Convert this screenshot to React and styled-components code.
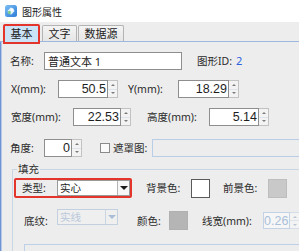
import React from 'react';
import styled, { createGlobalStyle } from 'styled-components';

const GlobalStyle = createGlobalStyle`
  html, body {
    margin: 0;
    padding: 0;
    background: #ededed;
  }
  body {
    font-family: "Noto Sans", "Noto Sans CJK SC", sans-serif;
    color: #2b2b2b;
  }
`;

const Window = styled.div`
  width: 299px;
  height: 251px;
  overflow: hidden;
  display: flex;
  flex-direction: column;
  background: #ededed;
`;

const TitleBar = styled.div`
  flex: none;
  height: 22px;
  display: flex;
  align-items: center;
  gap: 5px;
  padding-left: 5px;
  background: #fff;
  font-size: 10px;
  color: #222;
`;

const TabStrip = styled.div`
  flex: none;
  height: 19px;
  display: flex;
  align-items: flex-end;
  padding-left: 3px;
  border-bottom: 1px solid #9db8de;
`;

const Tab = styled.div`
  box-sizing: border-box;
  position: relative;
  z-index: ${p => (p.$active ? 2 : 1)};
  width: ${p => p.$w}px;
  height: ${p => (p.$active ? 20 : 16)}px;
  margin-right: ${p => (p.$active ? 2 : 1)}px;
  margin-bottom: ${p => (p.$active ? -3 : 0)}px;
  display: flex;
  align-items: center;
  justify-content: center;
  border: ${p => (p.$active ? '2px solid #e3352c' : '1px solid #b3b3b3')};
  border-bottom: ${p => (p.$active ? '2px solid #e3352c' : 'none')};
  border-radius: 2px 2px 0 0;
  background: ${p => (p.$active ? '#cbe3f6' : 'linear-gradient(#f4f4f4, #e6e6e6)')};
  font-size: 11px;
  line-height: 14px;
  color: #222;
`;

const Panel = styled.div`
  flex: 1;
  display: flex;
  flex-direction: column;
  overflow: hidden;
  box-shadow: inset 1px 0 #7195d0, inset 2px 0 #b3c8ea;
`;

const Row = styled.div`
  flex: none;
  display: flex;
  align-items: center;
  height: ${p => p.$h || 18}px;
  margin-top: ${p => p.$mt || 0}px;
`;

const Label = styled.span`
  flex: none;
  width: ${p => p.$w}px;
  margin-left: ${p => p.$ml || 0}px;
  font-size: 10.5px;
  line-height: 14px;
  white-space: nowrap;
  color: #2b2b2b;
`;

const IdValue = styled.span`
  margin-left: 4px;
  font-size: 11px;
  line-height: 14px;
  color: #2f5fe0;
`;

const TextBox = styled.div`
  flex: none;
  box-sizing: border-box;
  width: ${p => p.$w}px;
  height: 18px;
  display: flex;
  align-items: center;
  padding-left: 3px;
  border: 1px solid ${p => (p.$disabled ? '#b9cde6' : '#8e8e8e')};
  background: ${p => (p.$disabled ? 'transparent' : '#fff')};
  font-size: 11px;
  color: #222;
`;

const Spinner = styled.div`
  flex: none;
  display: flex;
  width: ${p => p.$w}px;
  height: ${p => p.$h || 18}px;
`;

const SpinField = styled.div`
  flex: 1;
  box-sizing: border-box;
  display: flex;
  align-items: center;
  justify-content: flex-end;
  padding-right: 1px;
  border: 1px solid ${p => (p.$disabled ? '#c3d2e4' : '#8e8e8e')};
  background: ${p => (p.$disabled ? '#f6f6f6' : '#fff')};
  font-family: "Liberation Sans Narrow", "Liberation Sans", sans-serif;
  font-size: 12.5px;
  color: ${p => (p.$disabled ? '#aac0da' : '#1e1e1e')};
`;

const SpinButtons = styled.div`
  flex: none;
  width: 10px;
  display: flex;
  flex-direction: column;
  box-sizing: border-box;
  border: 1px solid ${p => (p.$disabled ? '#d4dde8' : '#c2c2c2')};
  border-left: none;
  background: #f3f3f3;
`;

const SpinBtn = styled.div`
  flex: 1;
  display: flex;
  align-items: center;
  justify-content: center;
  & + & {
    border-top: 1px solid ${p => (p.$disabled ? '#dde4ec' : '#d2d2d2')};
  }
  &::after {
    content: '';
    border-left: 2px solid transparent;
    border-right: 2px solid transparent;
    ${p => (p.$down ? 'border-top' : 'border-bottom')}: 2px solid
      ${p => (p.$disabled ? '#b8c6d6' : '#7c7c7c')};
  }
`;

const CheckBox = styled.span`
  flex: none;
  box-sizing: border-box;
  width: 10px;
  height: 10px;
  margin-left: ${p => p.$ml}px;
  border: 1px solid #8a8a8a;
  background: #fafafa;
`;

const Group = styled.fieldset`
  flex: none;
  width: 320px;
  min-width: 0;
  margin: 5px 0 0 12px;
  padding: 0;
  border: 1px solid #c9d6e6;
  border-right: none;
  border-bottom: none;
`;

const GroupTitle = styled.legend`
  margin-left: 4px;
  padding: 0 1px;
  font-size: 10.5px;
  line-height: 14px;
  color: #2b2b2b;
`;

const Highlight = styled.div`
  flex: none;
  box-sizing: border-box;
  display: flex;
  align-items: center;
  width: 118px;
  height: 20px;
  margin-left: 1px;
  padding-left: 6px;
  border: 2px solid #e3352c;
  border-radius: 2px;
`;

const Combo = styled.div`
  flex: none;
  box-sizing: border-box;
  display: flex;
  width: ${p => p.$w}px;
  height: 16px;
  align-self: ${p => (p.$top ? 'flex-start' : 'center')};
  border: 1px solid ${p => (p.$disabled ? '#c3d0e0' : '#9a9a9a')};
  background: ${p => (p.$disabled ? '#efefef' : '#fff')};
`;

const ComboText = styled.span`
  flex: 1;
  padding-left: 2px;
  font-size: 10.5px;
  line-height: 14px;
  color: ${p => (p.$disabled ? '#b9c8db' : '#222')};
`;

const ComboButton = styled.span`
  flex: none;
  width: 11px;
  display: flex;
  align-items: center;
  justify-content: center;
  border-left: 1px solid ${p => (p.$disabled ? '#c9d5e3' : '#b5b5b5')};
  background: ${p => (p.$disabled ? '#efefef' : '#f7f7f7')};
  &::after {
    content: '';
    border-left: 4px solid transparent;
    border-right: 4px solid transparent;
    border-top: 4px solid ${p => (p.$disabled ? '#a9bdd6' : '#1a1a1a')};
  }
`;

const Swatch = styled.span`
  flex: none;
  box-sizing: border-box;
  width: 19px;
  height: 19px;
  border: 1px solid ${p => p.$border};
  background: ${p => p.$color};
`;

const InnerGroup = styled.div`
  flex: none;
  width: 300px;
  height: 30px;
  margin: 12px 0 0 11px;
  border: 1px solid #bdd0e8;
`;

const AppIcon = () => (
  <svg width="12" height="12" viewBox="0 0 12 12">
    <defs>
      <linearGradient id="ig" x1="0" y1="0" x2="1" y2="1">
        <stop offset="0" stopColor="#7cc0f4" />
        <stop offset="1" stopColor="#2b7ad6" />
      </linearGradient>
    </defs>
    <rect x="0" y="0" width="12" height="12" rx="2.5" fill="url(#ig)" />
    <path d="M6 2.2 L9.6 6 L6 9.8 L2.4 6 Z" fill="#e8f4ff" />
    <circle cx="4.4" cy="7.4" r="1.6" fill="#7dcf8a" />
    <circle cx="7.4" cy="4.6" r="1.3" fill="#ffffff" />
  </svg>
);

const Spin = ({ w, h, value, disabled }) => (
  <Spinner $w={w} $h={h}>
    <SpinField $disabled={disabled}>{value}</SpinField>
    <SpinButtons $disabled={disabled}>
      <SpinBtn $disabled={disabled} />
      <SpinBtn $disabled={disabled} $down />
    </SpinButtons>
  </Spinner>
);

export default function App() {
  return (
    <>
      <GlobalStyle />
      <Window>
        <TitleBar>
          <AppIcon />
          <span>图形属性</span>
        </TitleBar>
        <TabStrip>
          <Tab $active $w={37}>基本</Tab>
          <Tab $w={35}>文字</Tab>
          <Tab $w={46}>数据源</Tab>
        </TabStrip>
        <Panel>
          <Row $mt={10}>
            <Label $ml={10} $w={34}>名称:</Label>
            <TextBox $w={138}>普通文本 1</TextBox>
            <Label $ml={15}>图形ID:</Label>
            <IdValue>2</IdValue>
          </Row>
          <Row $mt={10}>
            <Label $ml={11} $w={47}>X(mm):</Label>
            <Spin w={60} value="50.5" />
            <Label $ml={10} $w={50}>Y(mm):</Label>
            <Spin w={61} value="18.29" />
          </Row>
          <Row $mt={10}>
            <Label $ml={11} $w={62}>宽度(mm):</Label>
            <Spin w={58} value="22.53" />
            <Label $ml={16} $w={62}>高度(mm):</Label>
            <Spin w={60} value="5.14" />
          </Row>
          <Row $mt={13}>
            <Label $ml={10} $w={34}>角度:</Label>
            <Spin w={38} value="0" />
            <CheckBox $ml={18} />
            <Label $ml={3} $w={39}>遮罩图:</Label>
            <TextBox $w={160} $disabled />
          </Row>
          <Group>
            <GroupTitle>填充</GroupTitle>
            <Row $mt={2} $h={20}>
              <Highlight>
                <Label $w={35}>类型:</Label>
                <Combo $w={73}>
                  <ComboText>实心</ComboText>
                  <ComboButton />
                </Combo>
              </Highlight>
              <Label $ml={14} $w={45}>背景色:</Label>
              <Swatch $color="#fff" $border="#5a5a5a" />
              <Label $ml={13} $w={45}>前景色:</Label>
              <Swatch $color="#c9c9c9" $border="#bdbdbd" />
            </Row>
            <Row $mt={11} $h={23}>
              <Label $ml={11} $w={33}>底纹:</Label>
              <Combo $w={61} $top $disabled>
                <ComboText $disabled>实线</ComboText>
                <ComboButton $disabled />
              </Combo>
              <Label $ml={19} $w={32}>颜色:</Label>
              <Swatch $color="#b5b5b5" $border="#b0b0b0" />
              <Label $ml={14} $w={61}>线宽(mm):</Label>
              <Spin w={34} h={17} value="0.26" disabled />
            </Row>
            <InnerGroup />
          </Group>
        </Panel>
      </Window>
    </>
  );
}
